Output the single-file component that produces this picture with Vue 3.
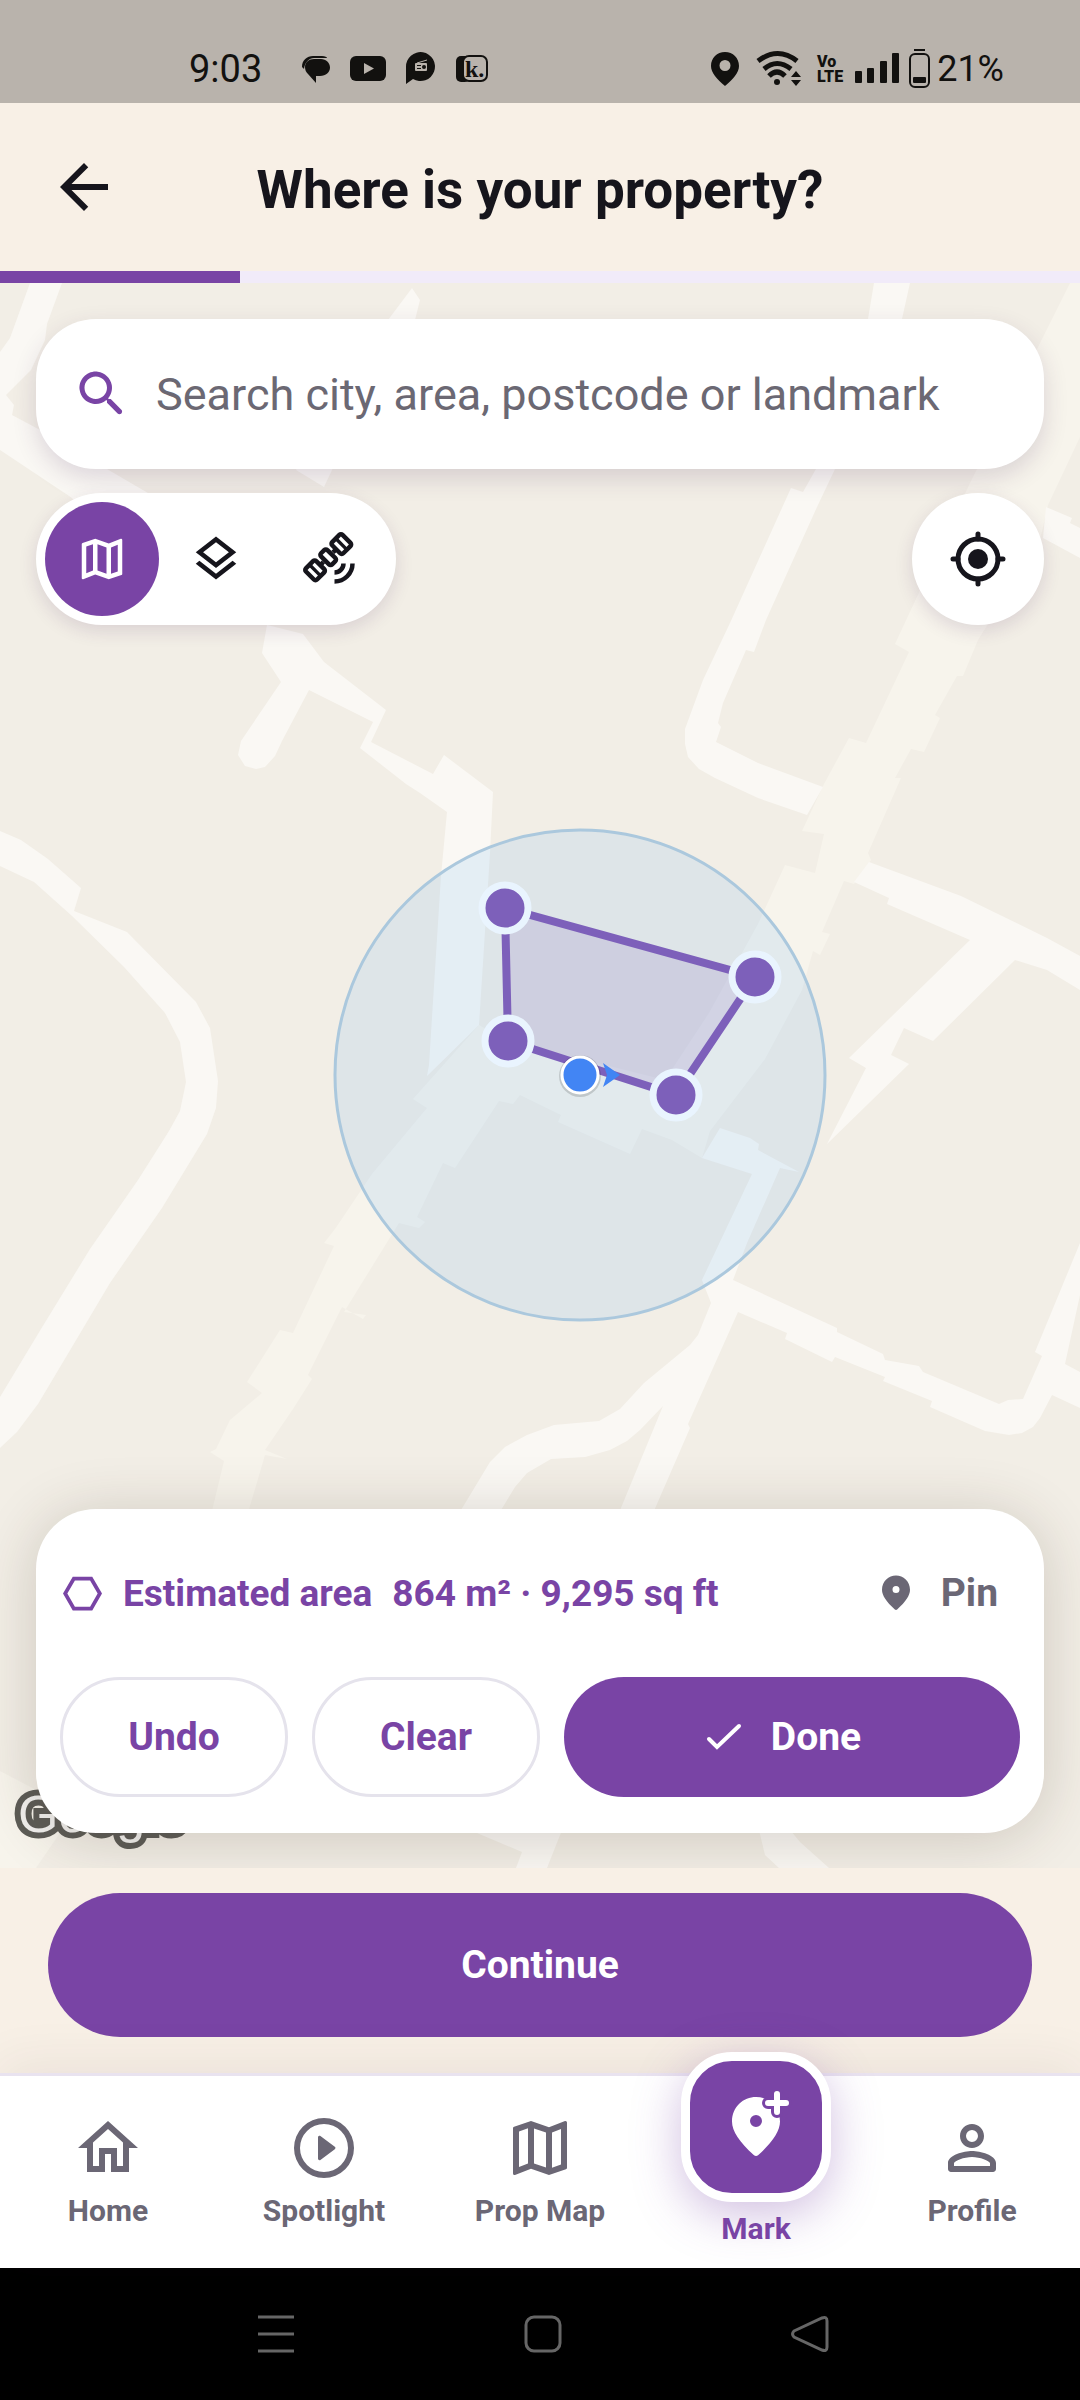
<script setup>
import { ref } from "vue";

const search = ref("");
const mapType = ref("map");
const activeTab = ref("Mark");

const icons = {
  map: "M20.5 3L20.34 3.03L15 5.1L9 3L3.36 4.9C3.15 4.97 3 5.15 3 5.38V20.5A.5.5 0 0 0 3.5 21L3.66 20.97L9 18.9L15 21L20.64 19.1C20.85 19.03 21 18.85 21 18.62V3.5A.5.5 0 0 0 20.5 3M10 5.47L14 6.87V18.53L10 17.13V5.47M5 6.46L8 5.45V17.15L5 18.31V6.46M19 17.54L16 18.55V6.86L19 5.7V17.54Z",
  layers: "M12 18.54L19.37 12.8L21 14.07L12 21.07L3 14.07L4.62 12.81L12 18.54M12 16L3 9L12 2L21 9L12 16M12 4.53L6.26 9L12 13.47L17.74 9L12 4.53Z",
  home: "M12 5.69L17 10.19V18H15V12H9V18H7V10.19L12 5.69M12 3L2 12H5V20H11V14H13V20H19V12H22Z",
  play: "M12 2a10 10 0 1 0 0 20 10 10 0 0 0 0-20zm0 18a8 8 0 1 1 0-16 8 8 0 0 1 0 16zM10 8.4v7.2c0 .4.5.6.8.4l4.8-3.6c.3-.2.3-.6 0-.8L10.8 8c-.3-.2-.8 0-.8.4z",
  person: "M12 6a2 2 0 1 1 0 4 2 2 0 0 1 0-4m0 9c2.7 0 5.8 1.29 6 2v1H6v-.99c.2-.72 3.3-2.01 6-2.01m0-11C9.79 4 8 5.79 8 8s1.79 4 4 4 4-1.79 4-4-1.79-4-4-4zm0 9c-2.67 0-8 1.34-8 4v2c0 .55.45 1 1 1h14c.55 0 1-.45 1-1v-2c0-2.66-5.33-4-8-4z",
  pin: "M12 2c-4.2 0-8 3.22-8 8.2 0 3.18 2.45 6.92 7.34 11.23.38.33.95.33 1.33 0C17.55 17.12 20 13.38 20 10.2 20 5.22 16.2 2 12 2zm0 10a2 2 0 1 1 0-4 2 2 0 0 1 0 4z",
  search: "M15.5 14h-.79l-.28-.27c1.2-1.4 1.82-3.31 1.48-5.34-.47-2.78-2.79-5-5.59-5.34-4.23-.52-7.79 3.04-7.27 7.27.34 2.8 2.56 5.12 5.34 5.59 2.03.34 3.94-.28 5.34-1.48l.27.28v.79l4.25 4.25c.41.41 1.08.41 1.49 0 .41-.41.41-1.08 0-1.49L15.5 14zm-6 0C7.01 14 5 11.99 5 9.5S7.01 5 9.5 5 14 7.01 14 9.5 11.99 14 9.5 14z",
  back: "M20 11H7.83l5.59-5.59L12 4l-8 8 8 8 1.41-1.41L7.83 13H20v-2z",
};

const tabs = [
  { name: "Home", icon: icons.home },
  { name: "Spotlight", icon: icons.play },
  { name: "Prop Map", icon: icons.map },
  { name: "Mark", icon: icons.pin, raised: true },
  { name: "Profile", icon: icons.person },
];

// Streets
const roads = [
  "0,831 21,840 48,859 81,888 74,911 127,932 196,1002 210,1028 218,1081 216,1108 207,1134 162,1208 110,1283 69,1352 38,1404 17,1432 0,1448 0,1397 41,1329 90,1249 138,1180 169,1131 180,1111 186,1082 180,1042 165,1013 124,967 72,916 34,882 0,866",
  "267,625 303,634 324,662 386,710 371,742 433,774 444,755 493,792 490,853 479,1025 427,1076 429,1065 441,876 447,812 420,793 406,784 360,748 373,722 309,690 282,741 275,756 265,767 256,769 245,766 238,755 241,741 281,682 262,653",
  "30,283 62,283 47,324 45,340 31,370 6,395 14,405 12,415 40,430 148,493 90,520 72,498 0,450 0,352 10,338",
  "412,288 420,300 415,320 332,470 324,487 296,470 388,320",
  "874,283 910,283 902,319 835,469 817,507 798,549 766,620 754,652 746,650 723,703 718,723 721,727 716,742 758,763 823,787 807,815 758,798 715,778 699,769 688,757 685,744 685,729 703,680 730,623 791,488 803,492 816,469 868,319",
  "869,862 961,896 1047,938 1080,956 1080,990 1047,970 1015,960 933,1041 904,1028 891,1055 909,1064 827,1144 866,1068 849,1058 970,940 887,904 889,898 854,882",
  "720,1128 750,1138 759,1144 758,1150 799,1172 780,1168 747,1243 733,1280 837,1328 837,1332 883,1354 885,1360 919,1366 923,1372 999,1404 1008,1400 1023,1399 1042,1356 1035,1352 1080,1243 1080,1295 1065,1364 1080,1372 1080,1408 1052,1395 1040,1418 1033,1427 1022,1433 1009,1435 985,1431 930,1407 932,1401 883,1381 885,1377 835,1357 832,1362 785,1339 787,1333 738,1312 688,1424 690,1428 650,1520 616,1520 663,1406 640,1430 627,1441 610,1450 585,1457 551,1459 527,1473 515,1487 495,1520 455,1520 490,1462 505,1447 527,1435 554,1425 599,1421 620,1409 644,1383 690,1345 698,1335 711,1303 702,1280 752,1174 702,1158",
  "1046,507 1072,518 1070,523 1080,528 1080,558 1043,538",
  "470,1830 562,1830 547,1868 516,1868 522,1852",
  "759,1830 790,1830 800,1842 829,1868 779,1868 765,1855",
];

// Wider pedestrian strips, a little darker than streets
const paths = [
  "1070,283 1080,283 1080,437 1048,505 1040,540 978,640 963,676 957,676 935,715 940,718 924,752 911,749 895,778 901,778 868,853 871,860 854,884 844,881 822,932 830,934 820,955 813,951 802,990 765,1059 710,1131 702,1158 672,1140 642,1129 630,1154 558,1122 561,1115 520,1095 513,1104 499,1101 455,1168 443,1163 417,1217 425,1222 419,1228 399,1223 344,1312 366,1315 363,1319 342,1307 308,1375 312,1379 293,1409 265,1450 287,1459 265,1455 240,1540 205,1540 224,1461 210,1452 216,1449 230,1420 262,1393 247,1382 280,1330 293,1333 334,1246 324,1243 335,1229 372,1174 427,1108 413,1099 479,1025 505,1040 665,1080 709,1013 758,924 785,865 815,873 824,834 802,831 824,784 849,738 866,743 909,652 895,644 970,483",
  "0,1771 40,1792 60,1833 36,1868 0,1868",
];

const corners = ref([
  { x: 505, y: 908 },
  { x: 755, y: 977 },
  { x: 676, y: 1095 },
  { x: 508, y: 1041 },
]);

const undo = () => {
  corners.value.pop();
};

const clear = () => {
  corners.value = [];
};
</script>

<template>
  <div class="screen">
    <div class="status">
      <div class="status-group">
        <span class="clock">9:03</span>
        <svg width="186" height="34" viewBox="0 0 186 34">
          <!-- messages -->
          <path d="M0 15C0 8 5 4 11 4h9c3 0 5 1 5 2H12C7 6 3 10 2 17z" />
          <path d="M3 15c0-5 4-8 9-8h7c5 0 9 4 9 8.500S24 24 18 24h-4v7L6 22c-2-2-3-4-3-7z" />
          <!-- video -->
          <rect x="48" y="4" width="36" height="25" rx="6" />
          <path class="cut" d="M62 11l10 5.500L62 22z" />
          <!-- radio bubble -->
          <path d="M104 32V15a14.500 14.500 0 1 1 7 12z" />
          <rect class="cut" x="113" y="11" width="12" height="8" rx="1" />
          <path d="M115 13h4v1h-4zM115 16h4v1h-4z" />
          <circle cx="122" cy="15" r="2" />
          <path class="cut-line" d="M115 11l10-3" />
          <!-- k. -->
          <rect x="154" y="4" width="14" height="26" rx="5" />
          <rect class="k-box" x="161" y="4" width="24" height="25" rx="6" />
          <text class="k-text" x="163" y="25">k.</text>
        </svg>
      </div>
      <div class="status-group">
        <svg width="92" height="40" viewBox="0 0 92 40">
          <path d="M14 3C6 3 0 9 0 17c0 7 6 13 14 20 8-7 14-13 14-20C28 9 22 3 14 3zm0 19a5.500 5.500 0 1 1 0-11 5.500 5.500 0 0 1 0 11z" />
          <g class="wifi">
            <path d="M47 12q20-15 39 0" />
            <path d="M53 20q13-11 27 0" />
            <path d="M58 27q8-8 16 0" />
          </g>
          <circle cx="66" cy="33" r="3" />
          <path d="M80 28l5-6 5 6zM80 31h10l-5 6z" />
        </svg>
        <span class="volte">Vo<br />LTE</span>
        <svg width="76" height="40" viewBox="0 0 76 40">
          <rect x="0" y="22" width="7" height="12" rx="1" />
          <rect x="12" y="19" width="7" height="15" rx="1" />
          <rect x="25" y="12" width="7" height="22" rx="1" />
          <rect x="37" y="4" width="7" height="30" rx="1" />
          <rect x="59" y="0" width="11" height="2" />
          <rect class="battery" x="55" y="5" width="19" height="33" rx="5" />
          <rect x="58" y="28" width="13" height="6" rx="1" />
        </svg>
        <span class="percent">21%</span>
      </div>
    </div>

    <header class="header">
      <button class="back" type="button" aria-label="Back">
        <svg width="72" height="72" viewBox="0 0 24 24"><path :d="icons.back" /></svg>
      </button>
      <h1>Where is your property?</h1>
    </header>
    <div class="progress"><div class="progress-bar"></div></div>

    <main class="map">
      <svg class="map-canvas" viewBox="0 283 1080 1585" preserveAspectRatio="xMidYMid slice">
        <polygon v-for="p in paths" :key="p" class="path" :points="p" />
        <polygon v-for="r in roads" :key="r" class="road" :points="r" />
        <polygon class="area" :points="corners.map((c) => `${c.x},${c.y}`).join(' ')" />
        <circle v-for="(c, i) in corners" :key="i" class="corner" :cx="c.x" :cy="c.y" r="23" />
        <circle class="accuracy" cx="580" cy="1075" r="245" />
        <path class="heading" d="M603 1063l17 12-17 12 4-12z" />
        <circle class="me-shadow" cx="580" cy="1076" r="21" />
        <circle class="me" cx="580" cy="1075" r="18" />
      </svg>
      <span class="google">Google</span>

      <label class="search">
        <svg width="60" height="60" viewBox="0 0 24 24"><path :d="icons.search" /></svg>
        <input v-model="search" type="text" aria-label="Search location" placeholder="Search city, area, postcode or landmark" />
      </label>

      <div class="tools">
        <div class="types">
          <button type="button" aria-label="Map" :class="{ active: mapType === 'map' }" @click="mapType = 'map'">
            <svg width="54" height="54" viewBox="0 0 24 24"><path :d="icons.map" /></svg>
          </button>
          <button type="button" aria-label="Layers" :class="{ active: mapType === 'layers' }" @click="mapType = 'layers'">
            <svg width="54" height="54" viewBox="0 0 24 24"><path :d="icons.layers" /></svg>
          </button>
          <button type="button" aria-label="Satellite" :class="{ active: mapType === 'satellite' }" @click="mapType = 'satellite'">
            <svg width="54" height="54" viewBox="0 0 24 24">
              <g class="line" transform="translate(11.2 11.2) rotate(-45)">
                <rect x="-2" y="-3.5" width="4" height="7" rx="1" />
                <rect x="5" y="-3.5" width="6.5" height="7" rx="1" />
                <rect x="-11.5" y="-3.5" width="6.5" height="7" rx="1" />
                <path d="M3 0h2M-5 0h2" />
                <path class="thin" d="M8.25-3v6M-8.25-3v6" />
              </g>
              <path class="line" d="M22 14a8 8 0 0 1-8 8M18 14a4 4 0 0 1-4 4" />
            </svg>
          </button>
        </div>
        <button class="locate" type="button" aria-label="My location">
          <svg width="60" height="60" viewBox="0 0 24 24">
            <circle cx="12" cy="12" r="4" />
            <circle class="line" cx="12" cy="12" r="8" />
            <path class="line round" d="M12 2v2M12 20v2M2 12h2M20 12h2" />
          </svg>
        </button>
      </div>

      <section class="card">
        <div class="card-row">
          <svg width="45" height="45" viewBox="0 0 24 24">
            <path d="M17.2 3H6.8l-5.2 9 5.2 9h10.4l5.2-9-5.2-9zm-1.15 16h-8.1l-4.04-7 4.04-7h8.09l4.04 7-4.03 7z" />
          </svg>
          <p class="estimate"><span>Estimated area</span><span>864 m² · 9,295 sq ft</span></p>
          <button class="pin" type="button">
            <svg width="42" height="42" viewBox="0 0 24 24"><path :d="icons.pin" /></svg>
            Pin
          </button>
        </div>
        <div class="card-actions">
          <button class="outlined" type="button" @click="undo">Undo</button>
          <button class="outlined" type="button" @click="clear">Clear</button>
          <button class="done" type="button">
            <svg width="48" height="48" viewBox="0 0 24 24"><path d="M5 13l4 4L20 6.5" /></svg>
            Done
          </button>
        </div>
      </section>
    </main>

    <div class="footer">
      <button class="continue" type="button">Continue</button>
    </div>

    <nav class="tabs">
      <a
        v-for="tab in tabs"
        :key="tab.name"
        href="#"
        class="tab"
        :class="{ active: tab.name === activeTab, raised: tab.raised }"
        @click.prevent="activeTab = tab.name"
      >
        <span class="tab-icon">
          <svg width="72" height="72" viewBox="0 0 24 24">
            <path :d="tab.icon" />
            <template v-if="tab.raised">
              <path class="plus-gap" d="M19 1v6M16 4h6" />
              <path class="plus" d="M19 1v6M16 4h6" />
            </template>
          </svg>
        </span>
        <span>{{ tab.name }}</span>
      </a>
    </nav>

    <div class="system">
      <button type="button" aria-label="Recent apps">
        <svg width="42" height="42" viewBox="0 0 42 42"><path d="M3 4h36M3 21h36M3 38h36" /></svg>
      </button>
      <button type="button" aria-label="Home screen">
        <svg width="42" height="42" viewBox="0 0 42 42"><rect x="4" y="4" width="34" height="34" rx="8" /></svg>
      </button>
      <button type="button" aria-label="System back">
        <svg width="42" height="42" viewBox="0 0 42 42"><path d="M5 18L33 5q5-2 5 3v26q0 5-5 3L5 24q-3-3 0-6z" /></svg>
      </button>
    </div>
  </div>
</template>

<style>
body {
  margin: 0;
}
</style>

<style scoped>
.screen {
  display: flex;
  flex-direction: column;
  min-height: 100vh;
  background: #f8f0e6;
  color: #16151c;
  font-family: Roboto, "Noto Sans", sans-serif;
}

button {
  display: flex;
  align-items: center;
  justify-content: center;
  padding: 0;
  border: none;
  background: none;
  color: inherit;
  font-family: inherit;
  font-weight: 700;
  font-size: 39px;
  cursor: pointer;
}

svg {
  flex: none;
  fill: currentColor;
}

.line {
  fill: none;
  stroke: currentColor;
  stroke-width: 2;
}

.thin {
  stroke-width: 1.5;
}

.round {
  stroke-linecap: round;
}

/* Status bar */
.status {
  display: flex;
  justify-content: space-between;
  box-sizing: border-box;
  height: 103px;
  padding: 35px 76px 0 189px;
  background: #b9b3ac;
  color: #12110f;
}

.status-group {
  display: flex;
  align-items: center;
}

.clock {
  width: 113px;
  font-size: 38px;
}

.cut {
  fill: #b9b3ac;
}

.cut-line {
  stroke: #b9b3ac;
}

.k-box {
  fill: #b9b3ac;
  stroke: #12110f;
  stroke-width: 2;
}

.k-text {
  font-family: "Liberation Serif", serif;
  font-weight: bold;
  font-size: 24px;
}

.wifi {
  fill: none;
  stroke: currentColor;
  stroke-width: 5;
}

.volte {
  margin: 0 12px 0 14px;
  font-weight: 900;
  font-size: 16px;
  line-height: 15px;
}

.battery {
  fill: none;
  stroke: currentColor;
  stroke-width: 2;
}

.percent {
  margin-left: 6px;
  font-size: 36px;
}

/* Header */
.header {
  display: grid;
  grid-template-columns: 72px 1fr 72px;
  align-items: center;
  height: 168px;
  padding: 0 48px;
}

.header h1 {
  margin: 0;
  padding-top: 6px;
  font-weight: 700;
  font-size: 53px;
  text-align: center;
}

.progress {
  height: 12px;
  background: #f1ebf9;
}

.progress-bar {
  width: 22.2%;
  height: 100%;
  background: #7944a5;
}

/* Map */
.map {
  position: relative;
  display: flex;
  flex: 1;
  flex-direction: column;
  gap: 24px;
  padding: 36px 36px 35px;
  background: #f2eee6;
  overflow: hidden;
}

.map-canvas {
  position: absolute;
  inset: 0;
  width: 100%;
  height: 100%;
}

.road {
  fill: #faf8f4;
}

.path {
  fill: #f7f4ec;
}

.area {
  fill: rgba(121, 68, 165, 0.15);
  stroke: #8052b0;
  stroke-width: 8;
}

.corner {
  fill: #8052b0;
  stroke: #fff;
  stroke-width: 7;
}

.accuracy {
  fill: rgba(105, 182, 245, 0.15);
  stroke: #abc8dd;
  stroke-width: 3;
}

.heading {
  fill: #4285f4;
}

.me {
  fill: #4285f4;
  stroke: #fff;
  stroke-width: 3;
}

.me-shadow {
  fill: rgba(0, 0, 0, 0.15);
}

.google {
  position: absolute;
  left: 18px;
  bottom: 27px;
  color: #f2f1ef;
  font-family: "Liberation Sans", Arial, sans-serif;
  font-size: 52px;
  line-height: 54px;
  -webkit-text-stroke: 12px #5d5c57;
  paint-order: stroke fill;
}

.search {
  position: relative;
  display: flex;
  align-items: center;
  gap: 24px;
  height: 150px;
  padding: 0 36px;
  border-radius: 60px;
  background: #fff;
  color: #7944a5;
  box-shadow: 0 9px 24px rgba(70, 35, 90, 0.16);
}

.search input {
  flex: 1;
  min-width: 0;
  padding: 0;
  border: none;
  outline: none;
  background: none;
  color: #16151c;
  font-family: inherit;
  font-size: 45px;
}

.search input::placeholder {
  color: #6b6873;
  opacity: 1;
}

.tools {
  position: relative;
  display: flex;
  justify-content: space-between;
}

.types {
  display: flex;
  padding: 9px;
  border-radius: 66px;
  background: #fff;
  box-shadow: 0 6px 18px rgba(70, 35, 90, 0.14);
}

.types button {
  width: 114px;
  height: 114px;
  border-radius: 50%;
}

.types .active {
  background: #7944a5;
  color: #fff;
}

.locate {
  width: 132px;
  height: 132px;
  border-radius: 50%;
  background: #fff;
  box-shadow: 0 6px 18px rgba(70, 35, 90, 0.14);
}

/* Area card */
.card {
  position: relative;
  margin-top: auto;
  padding: 24px 24px 36px;
  border-radius: 60px;
  background: #fff;
  color: #7944a5;
  box-shadow: 0 6px 60px rgba(60, 45, 30, 0.2);
}

.card-row {
  display: flex;
  align-items: center;
  gap: 18px;
  height: 120px;
}

.estimate {
  display: flex;
  flex: 1;
  gap: 20px;
  margin: 0;
  font-weight: 700;
  font-size: 37px;
  white-space: nowrap;
}

.pin {
  gap: 24px;
  height: 120px;
  padding: 0 22px;
  color: #6b6775;
}

.card-actions {
  display: grid;
  grid-template-columns: 1fr 1fr 2fr;
  gap: 24px;
  margin-top: 24px;
}

.card-actions button {
  height: 120px;
  border-radius: 60px;
}

.outlined {
  border: 3px solid #e5e3ec;
}

.card-actions .done {
  gap: 24px;
  padding-right: 24px;
  background: #7944a5;
  color: #fff;
}

.done svg {
  fill: none;
  stroke: currentColor;
  stroke-width: 2;
  stroke-linecap: round;
}

/* Footer */
.footer {
  padding: 25px 48px 36px;
}

.continue {
  width: 100%;
  height: 144px;
  border-radius: 72px;
  background: #7944a5;
  color: #fff;
}

.tabs {
  position: relative;
  display: grid;
  grid-template-columns: repeat(5, 1fr);
  box-sizing: border-box;
  height: 195px;
  padding-top: 36px;
  border-top: 3px solid #e9e3ef;
  background: #fff;
  box-shadow: 0 -9px 48px rgba(60, 40, 60, 0.07);
}

.tab {
  display: flex;
  flex-direction: column;
  align-items: center;
  gap: 9px;
  color: #6b6775;
  font-weight: 700;
  font-size: 30px;
  line-height: 36px;
  text-decoration: none;
}

.tab.active {
  color: #7944a5;
}

.tab-icon {
  display: flex;
}

.raised .tab-icon {
  align-items: center;
  justify-content: center;
  width: 132px;
  height: 132px;
  margin-top: -60px;
  border: 9px solid #fff;
  border-radius: 51px;
  background: #7944a5;
  color: #fff;
  box-shadow: 0 12px 48px rgba(121, 68, 165, 0.35);
}

.plus-gap {
  fill: none;
  stroke: #7944a5;
  stroke-width: 4;
  stroke-linecap: round;
}

.plus {
  fill: none;
  stroke: #fff;
  stroke-width: 2;
  stroke-linecap: round;
}

.system {
  display: grid;
  grid-template-columns: repeat(3, 1fr);
  height: 132px;
  padding: 0 136px 0 142px;
  background: #000;
  color: #666;
}

.system svg {
  fill: none;
  stroke: currentColor;
  stroke-width: 3;
}
</style>
